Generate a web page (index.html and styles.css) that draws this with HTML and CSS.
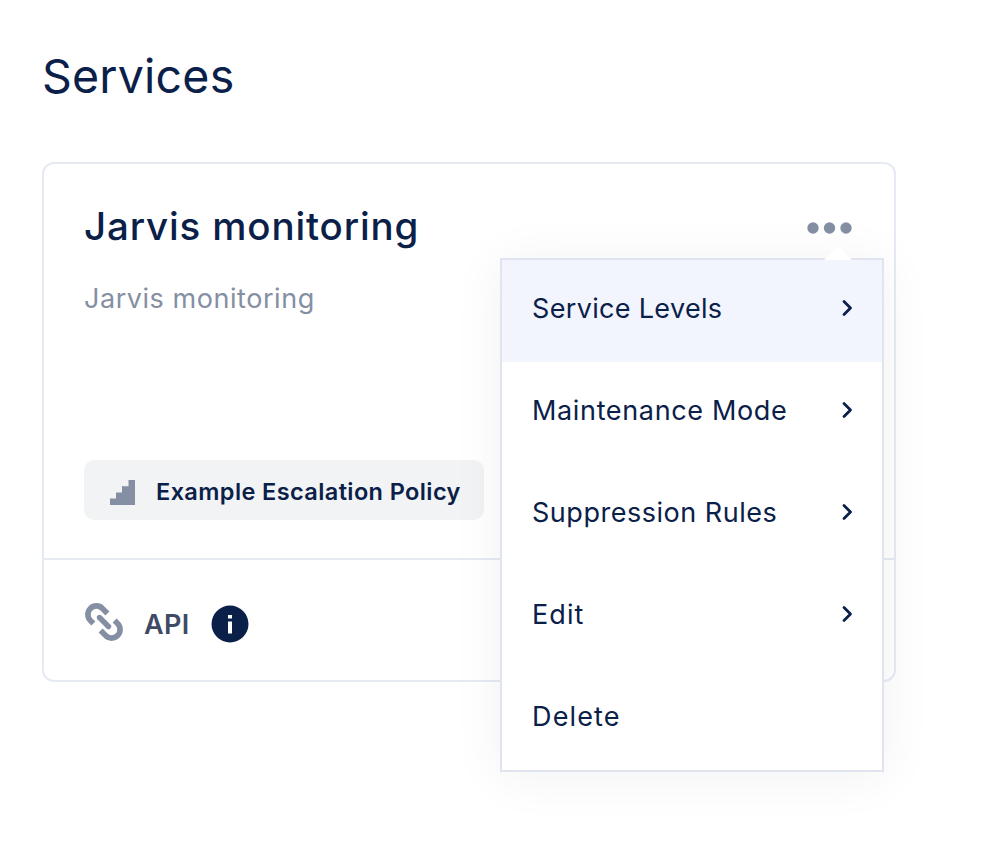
FILE: index.html
```html
<!DOCTYPE html>
<html lang="en">
<head>
<meta charset="utf-8">
<title>Services</title>
<link rel="stylesheet" href="styles.css">
</head>
<body>
<main class="page">
  <h1 class="page-title"><span>Services</span></h1>
  <section class="card">
    <div class="card-body">
      <div class="card-head">
        <h2 class="card-title"><span>Jarvis monitoring</span></h2>
        <button class="more" aria-label="More options">
          <svg width="46" height="12" viewBox="0 0 46 12" fill="#858fa3"><circle cx="6" cy="6" r="5.700"/><circle cx="22.500" cy="6" r="5.700"/><circle cx="39" cy="6" r="5.700"/></svg>
        </button>
      </div>
      <p class="card-desc"><span>Jarvis monitoring</span></p>
      <div class="policy">
        <svg width="25" height="25" viewBox="0 0 25 25" fill="#858fa3"><path d="M0 25V18.500H6V12.500H12V6.300H18.500V0H25V25Z"/></svg>
        <span class="policy-name">Example Escalation Policy</span>
      </div>
    </div>
    <footer class="card-foot">
      <svg class="link-icon" width="38" height="38" viewBox="0 0 38 38" fill="none" stroke="#858fa3" stroke-width="5.600"><path d="M8.400 20.400L5.400 17.400A8.300 8.300 0 0 1 17.400 5.400L22.400 10.400M29.600 17.600L32.600 20.600A8.300 8.300 0 0 1 20.600 32.600L15.600 27.600"/><path d="M14.500 14.500L23.500 23.500" stroke-width="5.400" stroke-linecap="round"/></svg>
      <span class="api">API</span>
      <svg width="38" height="38" viewBox="0 0 38 38"><circle cx="19" cy="19" r="18.500" fill="#0a2049"/><path d="M17 10h4v3.500h-4zM17 16.500h4v12h-4z" fill="#fff"/></svg>
    </footer>
    <nav class="menu">
      <a class="item active"><span class="levels">Service Levels</span><svg width="12" height="18" viewBox="0 0 12 18"><path d="M3 2.500L9.500 9L3 15.500"/></svg></a>
      <a class="item"><span class="maintenance">Maintenance Mode</span><svg width="12" height="18" viewBox="0 0 12 18"><path d="M3 2.500L9.500 9L3 15.500"/></svg></a>
      <a class="item"><span class="suppression">Suppression Rules</span><svg width="12" height="18" viewBox="0 0 12 18"><path d="M3 2.500L9.500 9L3 15.500"/></svg></a>
      <a class="item"><span class="edit">Edit</span><svg width="12" height="18" viewBox="0 0 12 18"><path d="M3 2.500L9.500 9L3 15.500"/></svg></a>
      <a class="item"><span class="delete">Delete</span></a>
    </nav>
  </section>
</main>
</body>
</html>
```
FILE: styles.css
```css
* { box-sizing: border-box; }
body {
  margin: 0;
  background: #fff;
  color: #0a2049;
  font-family: Inter, "Liberation Sans", sans-serif;
}
h1, h2, p { margin: 0; white-space: nowrap; }
svg { display: block; flex: none; }
.page { min-height: 856px; padding: 46px 92px 0 42px; }
.page-title {
  height: 60px;
  line-height: 60px;
  font-size: 46.5px;
  font-weight: 400;
  letter-spacing: 0.2px;
}
.card {
  position: relative;
  width: 854px;
  height: 520px;
  margin-top: 56px;
  border: 2px solid #e6eaf3;
  border-radius: 12px;
}
.card-body { height: 394px; padding: 37px 40px 38px 40px; display: flex; flex-direction: column; }
.card-head { display: flex; justify-content: space-between; align-items: center; height: 50px; }
.card-title { font-size: 38.5px; line-height: 50px; font-weight: 500; letter-spacing: 0.85px; }
.more { padding: 3px 0 0; border: 0; background: none; margin-right: 1px; }
.card-desc {
  margin-top: 29px;
  font-size: 27px;
  line-height: 38px;
  color: #858fa3;
  letter-spacing: 0.55px;
}
.policy {
  display: flex;
  align-items: center;
  gap: 21px;
  width: 400px;
  height: 60px;
  margin-top: auto;
  padding: 4px 26px 0;
  border-radius: 10px;
  background: #f2f3f5;
}
.policy-name {
  font-size: 23.5px;
  line-height: 30px;
  font-weight: 600;
  letter-spacing: 0.4px;
  white-space: nowrap;
  margin-top: -1px;
}
.card-foot {
  display: flex;
  align-items: center;
  height: 122px;
  padding: 8px 41px 0;
  border-top: 2px solid #e6eaf3;
}
.link-icon { margin-top: -4px; }
.api { width: 67px; margin-left: 21px; font-size: 27px; font-weight: 600; letter-spacing: 0.4px; color: #3f4b66; }
.menu {
  position: absolute;
  left: 456px;
  top: 94px;
  width: 384px;
  height: 514px;
  border: 2px solid #dfe4ee;
  background: #fff;
  box-shadow: 0 4px 50px rgba(10, 32, 73, 0.06);
}
.menu::before {
  content: "";
  position: absolute;
  right: 30px;
  top: -14px;
  border: 14px solid transparent;
  border-top: 0;
  border-bottom-color: #fff;
}
.item {
  display: flex;
  align-items: center;
  justify-content: space-between;
  height: 102px;
  padding: 0 29px 6px 30px;
  font-size: 27px;
  white-space: nowrap;
}
.levels { letter-spacing: 0.33px; }
.maintenance { letter-spacing: 0.65px; }
.suppression { letter-spacing: 0.52px; }
.edit { letter-spacing: 1.1px; }
.delete { letter-spacing: 1.15px; }
.active { background: #f2f5fe; }
.item path { fill: none; stroke: #0a2049; stroke-width: 2.8; stroke-linecap: round; stroke-linejoin: round; }
```
